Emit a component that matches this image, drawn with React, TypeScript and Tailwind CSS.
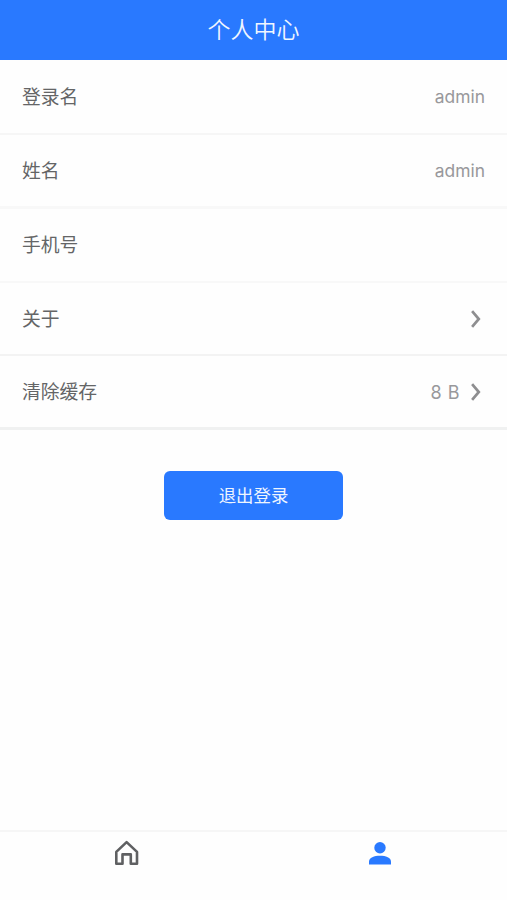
import React, { useState } from "react";

interface ProfileRow {
  id: string;
  label: string;
  value?: string;
  valueClass?: string;
  link?: boolean;
  border: string;
}

const rows: ProfileRow[] = [
  {
    id: "login",
    label: "登录名",
    value: "admin",
    valueClass: "pt-px text-[17.4px]",
    border: "h-[75px] border-b-2 border-[#f6f6f6]",
  },
  {
    id: "name",
    label: "姓名",
    value: "admin",
    valueClass: "pt-px text-[17.4px]",
    border: "h-[74px] border-b-3 border-[#f8f8f8] pt-px",
  },
  { id: "phone", label: "手机号", border: "h-[74px] border-b-2 border-[#f8f8f8] pb-px" },
  { id: "about", label: "关于", link: true, border: "h-[73px] border-b-2 border-[#f3f3f3]" },
  {
    id: "cache",
    label: "清除缓存",
    value: "8 B",
    valueClass: "pt-px text-[18px] tracking-[0.5px]",
    link: true,
    border: "h-[74px] border-b-3 border-[#f0f1f1]",
  },
];

function Chevron() {
  return (
    <svg width="12" height="20" viewBox="0 0 12 20" fill="none" className="mr-[3px] ml-[10px]">
      <path d="M2.1 2.2 8.8 10 2.1 17.8" stroke="#8e8e90" strokeWidth="2.7" />
    </svg>
  );
}

function HomeIcon() {
  return (
    <svg width="26" height="28" viewBox="0 0 26 28" fill="none">
      <path
        d="M2.3 12.9 12.6 3.1 23 12.9V24.8H16.8V15.4H8.5V24.8H2.3Z"
        stroke="#5f6062"
        strokeWidth="2.6"
        strokeLinejoin="round"
      />
    </svg>
  );
}

function UserIcon() {
  return (
    <svg width="26" height="28" viewBox="0 0 26 28" fill="#2979ff">
      <circle cx="13" cy="8.8" r="5.7" />
      <path d="M2 25.6V22.6C2 18.8 7.2 16.8 13 16.8S24 18.8 24 22.6V25.6Z" />
    </svg>
  );
}

export default function App() {
  const [tab, setTab] = useState("user");

  return (
    <div className="flex h-screen flex-col bg-[#fefefe] font-['Liberation_Sans','Noto_Sans_CJK_SC',sans-serif]">
      <header className="flex h-[60px] shrink-0 items-center justify-center bg-[#2979ff]">
        <h1 className="pb-[4px] font-['Noto_Sans_CJK_SC',sans-serif] text-[23px] leading-[56px] font-[350] text-[#f0f6ff]">
          个人中心
        </h1>
      </header>

      <main className="flex-1">
        {rows.map((row) => (
          <div key={row.id} className={`flex items-center justify-between px-[22px] ${row.border}`}>
            <span className="pb-px font-['Noto_Sans_CJK_SC',sans-serif] text-[18.8px] text-[#646566]">
              {row.label}
            </span>
            <div className="flex items-center font-[Inter,sans-serif] text-[#98989b]">
              {row.value && <span className={row.valueClass}>{row.value}</span>}
              {row.link && <Chevron />}
            </div>
          </div>
        ))}

        <button className="mx-auto mt-[41px] block h-[49px] w-[179px] rounded-md bg-[#2979ff] pb-[2px] font-['Noto_Sans_CJK_SC',sans-serif] text-[17.4px] leading-[47px] text-[#eef5ff]">
          退出登录
        </button>
      </main>

      <nav className="flex h-[70px] shrink-0 border-t-2 border-[#f6f6f6] pt-[7px]">
        <button
          aria-label="home"
          onClick={() => setTab("home")}
          className="flex flex-1 items-start justify-center"
        >
          <HomeIcon />
        </button>
        <button
          aria-label="user"
          aria-selected={tab === "user"}
          onClick={() => setTab("user")}
          className="flex flex-1 items-start justify-center"
        >
          <UserIcon />
        </button>
      </nav>
    </div>
  );
}
